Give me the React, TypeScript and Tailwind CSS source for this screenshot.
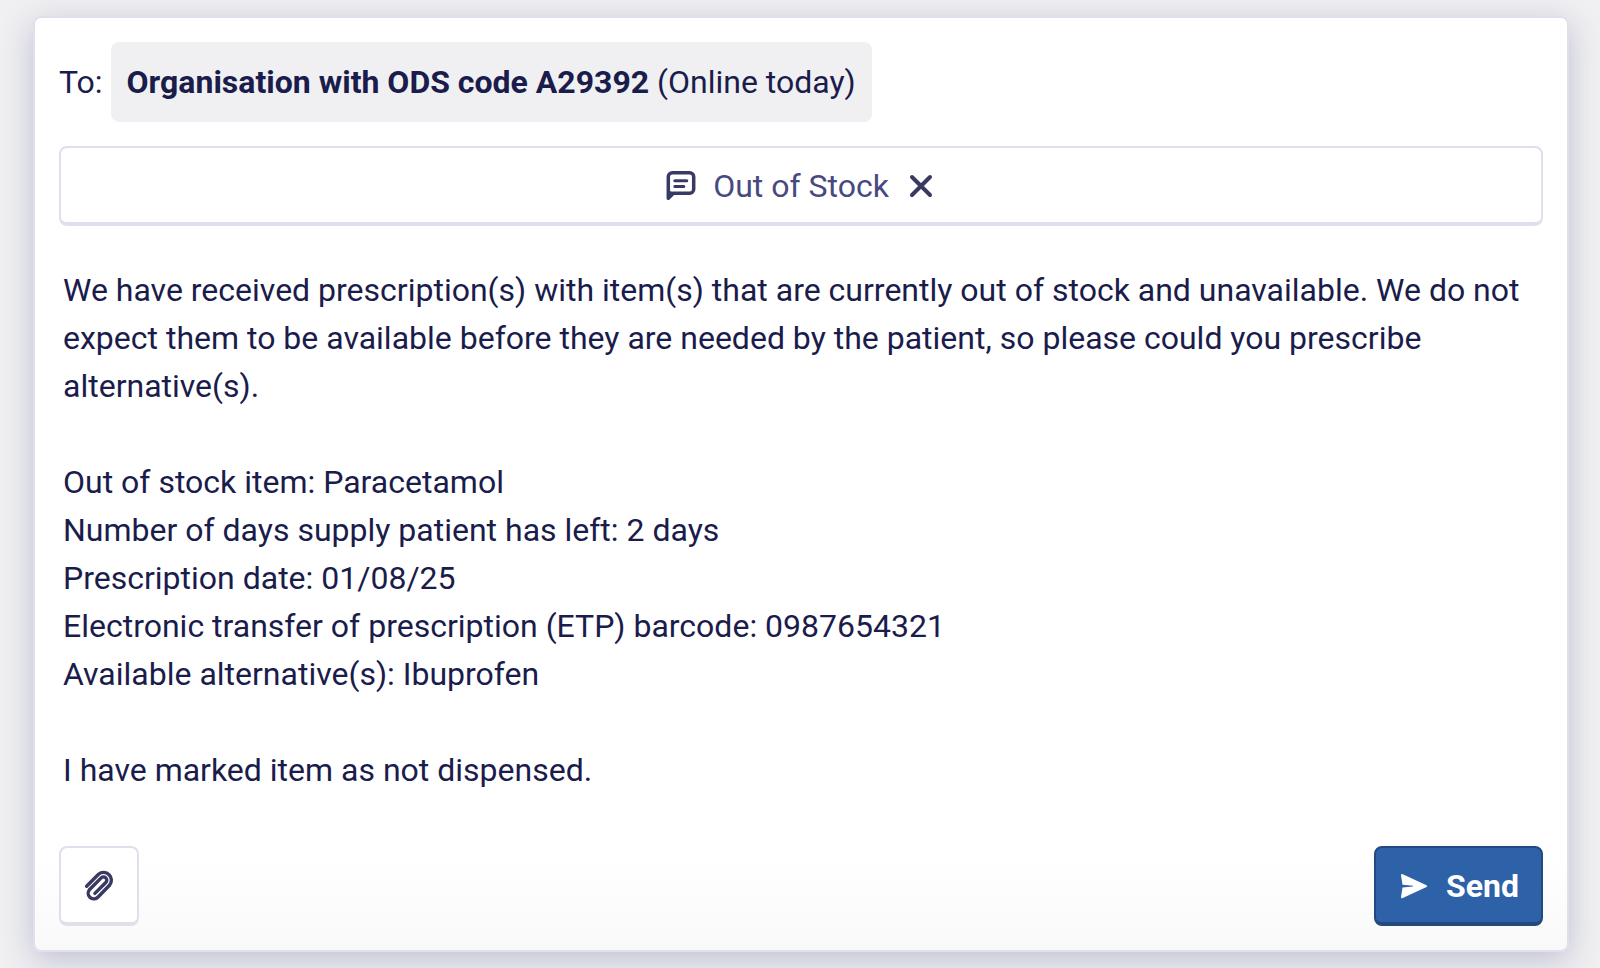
import { useState } from "react";

const template = `We have received prescription(s) with item(s) that are currently out of stock and unavailable. We do not expect them to be available before they are needed by the patient, so please could you prescribe alternative(s).

Out of stock item: Paracetamol
Number of days supply patient has left: 2 days
Prescription date: 01/08/25
Electronic transfer of prescription (ETP) barcode: 0987654321
Available alternative(s): Ibuprofen

I have marked item as not dispensed.`;

const MessageIcon = () => (
  <svg viewBox="0 0 32 32" className="h-8 w-8" fill="none" stroke="currentColor" strokeLinecap="round" strokeLinejoin="round" aria-hidden="true">
    <path d="M3.300 6.800a4 4 0 0 1 4-4h17.400a4 4 0 0 1 4 4v12.400a4 4 0 0 1-4 4H8.300L3.300 28.200z" strokeWidth="3.5" />
    <path d="M3.300 22v6.200l5-5z" fill="currentColor" strokeWidth="2.5" />
    <path d="M9.800 10.700h12M9.800 16.400h9" strokeWidth="3" />
  </svg>
);

const CloseIcon = () => (
  <svg viewBox="0 0 32 32" className="h-8 w-8" fill="none" stroke="currentColor" strokeWidth="4" strokeLinecap="round" aria-hidden="true">
    <path d="M7 7l18 18M25 7L7 25" />
  </svg>
);

const ClipIcon = () => (
  <svg viewBox="0 0 32 32" className="h-8 w-8 overflow-visible" fill="none" stroke="currentColor" strokeWidth="3.4" strokeLinecap="round" aria-hidden="true">
    <path d="M3.600 16.200L15.500 4.300A7.800 7.800 0 0 1 26.500 15.300L14.400 27.700A5.700 5.700 0 0 1 6.400 19.700L18.200 7.900A3.250 3.250 0 0 1 22.800 12.500L11.900 23.400" />
  </svg>
);

const SendIcon = () => (
  <svg viewBox="0 0 32 32" className="h-8 w-8" fill="currentColor" aria-hidden="true">
    <path d="M3 5.200Q3 3.500 4.800 4.200L28.500 15.200Q30 16.100 28.500 17L4.800 28Q3 28.700 3 27L4.500 17.500L15 16.500V15.700L4.500 14.700Z" />
  </svg>
);

const App = () => {
  const [message, setMessage] = useState(template);

  return (
    <div className="min-h-screen w-full bg-[#f0f0f2] pt-4 pb-4 pl-[33px] pr-[31px] font-[Roboto,sans-serif] text-[32px] leading-[48px] text-[#1a1c4b]">
      <form
        onSubmit={(e) => e.preventDefault()}
        className="rounded-lg border-2 border-[#e0dfeb] bg-linear-to-t from-[#f9f9f9] to-white to-10% p-6 shadow-[0_8px_32px_rgba(50,54,120,0.26)]"
      >
        <div className="flex items-center gap-2">
          <span>To:</span>
          <div className="rounded-lg bg-[#f0f0f2] p-4">
            <strong className="font-bold">Organisation with ODS code A29392</strong> (Online today)
          </div>
        </div>

        <button
          type="button"
          className="mt-6 flex h-20 w-full items-center justify-center gap-4 rounded-lg border-2 border-b-4 border-[#e0dfeb] bg-white pt-0.5 text-[#474980]"
        >
          <span className="text-[#383a63]">
            <MessageIcon />
          </span>
          Out of Stock
          <span className="text-[#383a63]">
            <CloseIcon />
          </span>
        </button>

        <textarea
          aria-label="Message"
          rows={11}
          value={message}
          onChange={(e) => setMessage(e.target.value)}
          className="mt-6 block w-full resize-none overflow-hidden bg-transparent px-1 py-4 outline-none"
        />

        <div className="mt-9 flex items-center justify-between">
          <button
            type="button"
            aria-label="Attach a file"
            className="flex h-20 w-20 items-center justify-center rounded-lg border-2 border-b-4 border-[#e0dfeb] bg-white pt-0.5 text-[#383a63]"
          >
            <ClipIcon />
          </button>
          <button
            type="submit"
            className="flex h-20 items-center gap-4 rounded-lg border-2 border-b-4 border-[#234980] bg-[#2d62a8] px-[22px] pt-0.5 font-bold text-white"
          >
            <SendIcon />
            Send
          </button>
        </div>
      </form>
    </div>
  );
};

export default App;
